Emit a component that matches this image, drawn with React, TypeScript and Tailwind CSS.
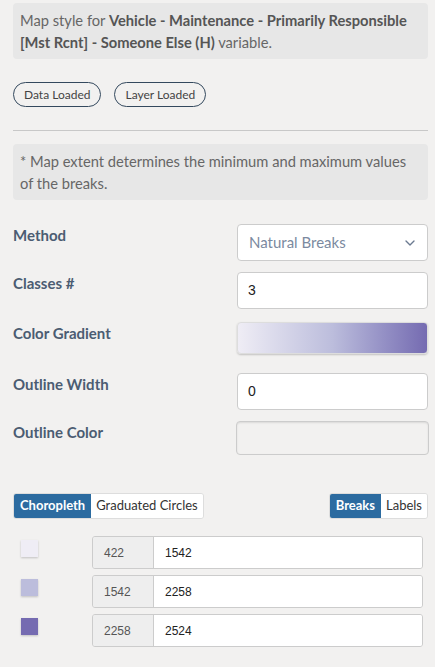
import { ChevronDown } from 'lucide-react';

const breaks = [
  { color: '#efedf5', from: '422', to: '1542' },
  { color: '#bcbddc', from: '1542', to: '2258' },
  { color: '#756bb1', from: '2258', to: '2524' },
];

function Field({ label, className = '', children }: { label: string; className?: string; children: React.ReactNode }) {
  return (
    <div className={`flex items-start justify-between ${className}`}>
      <div className="pt-[1px] text-[15px] font-bold leading-[20px] text-[#4b5c72]">{label}</div>
      <div className="w-[191px]">{children}</div>
    </div>
  );
}

export default function App() {
  return (
    <div className="min-h-[667px] bg-[#f2f1f0] pl-[13px] pr-[7px] pt-[3px] font-['Lato',sans-serif] text-[14.7px]">
      <div className="rounded-[4px] bg-[#e7e7e7] px-[7px] py-[6px] leading-[22px] text-[#666]">
        Map style for <b className="text-[#555]">Vehicle - Maintenance - Primarily Responsible [Mst Rcnt] - Someone Else (H)</b> variable.
      </div>

      <div className="mt-[23px] flex gap-[13px] text-[12px] text-[#444]">
        <span className="flex h-[25px] items-center rounded-full border border-[#34495e] px-[10px]">Data Loaded</span>
        <span className="flex h-[25px] items-center rounded-full border border-[#34495e] px-[10px]">Layer Loaded</span>
      </div>

      <div className="mt-[23px] border-t border-[#c8c8c8]" />

      <div className="mt-[13px] rounded-[4px] bg-[#e7e7e7] px-[7px] py-[6px] leading-[22px] text-[#666]">
        * Map extent determines the minimum and maximum values of the breaks.
      </div>

      <div className="mt-[24px] flex flex-col gap-[11px]">
        <Field label="Method">
          <div className="flex h-[37px] items-center justify-between rounded-[4px] border border-[#ccc] bg-white pl-[11px] pr-[9px] text-[15px] text-[#7b8aa0]">
            Natural Breaks
            <ChevronDown size={16} strokeWidth={2} className="text-[#6b7a90]" />
          </div>
        </Field>
        <Field label="Classes #">
          <div className="flex h-[37px] items-center rounded-[4px] border border-[#ccc] bg-white pl-[10px] font-['Liberation_Sans',sans-serif] text-[14px] text-[#222]">
            3
          </div>
        </Field>
        <Field label="Color Gradient" className="mt-[2px]">
          <div className="h-[32px] rounded-[4px] border border-[#ddd] bg-gradient-to-r from-[#efedf5] via-[#bcbddc] to-[#756bb1] shadow-[0_1px_2px_rgba(0,0,0,0.2)]" />
        </Field>
        <Field label="Outline Width" className="mt-[8px]">
          <div className="flex h-[37px] items-center rounded-[4px] border border-[#ccc] bg-white pl-[10px] font-['Liberation_Sans',sans-serif] text-[14px] text-[#222]">
            0
          </div>
        </Field>
        <Field label="Outline Color">
          <div className="-ml-[1px] h-[34px] w-[193px] rounded-[4px] border border-[#ccc] bg-[#f2f1f0] shadow-[inset_0_1px_2px_rgba(0,0,0,0.1)]" />
        </Field>
      </div>

      <div className="mt-[38px] flex items-center justify-between text-[13px]">
        <div className="flex overflow-hidden rounded-[3px] border border-[#ddd]">
          <span className="flex h-[24px] items-center bg-[#2c6ba0] px-[6px] font-bold text-white">Choropleth</span>
          <span className="flex h-[24px] items-center bg-white px-[5px] text-[#333]">Graduated Circles</span>
        </div>
        <div className="flex overflow-hidden rounded-[3px] border border-[#ddd]">
          <span className="flex h-[24px] items-center bg-[#2c6ba0] px-[6px] font-bold text-white">Breaks</span>
          <span className="flex h-[24px] items-center bg-white px-[5px] text-[#333]">Labels</span>
        </div>
      </div>

      <div className="mt-[17px] flex flex-col gap-[6px] pb-[20px]">
        {breaks.map((b) => (
          <div key={b.from} className="flex items-start">
            <div className="ml-[8px] mt-[4px] h-[17px] w-[17px] shadow-[0_1px_2px_rgba(0,0,0,0.2)]" style={{ backgroundColor: b.color }} />
            <div className="ml-[54px] flex h-[33px] w-[331px] overflow-hidden rounded-[3px] border border-[#ccc] font-['Liberation_Sans',sans-serif] text-[12px]">
              <div className="flex w-[61px] items-center border-r border-[#ccc] bg-[#eee] pl-[11px] text-[#555]">{b.from}</div>
              <div className="flex flex-1 items-center bg-white pl-[11px] text-[#222]">{b.to}</div>
            </div>
          </div>
        ))}
      </div>
    </div>
  );
}
